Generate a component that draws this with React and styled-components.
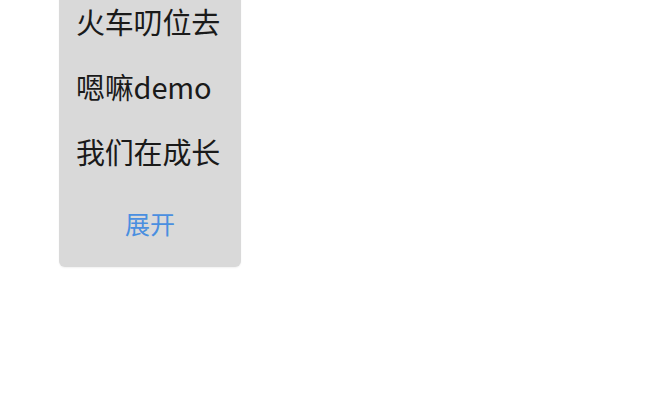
import { createGlobalStyle, styled } from "styled-components";

const GlobalStyle = createGlobalStyle`
  html, body {
    margin: 0;
    padding: 0;
    background: #ffffff;
  }
  body {
    font-family: "Noto Sans CJK SC", "Noto Sans", sans-serif;
    overflow: hidden;
  }
`;

const Page = styled.div`
  width: 670px;
  height: 415px;
  padding-left: 59px;
  box-sizing: border-box;
`;

const Panel = styled.div`
  width: 182px;
  margin-top: -12px;
  background: #d9d9d9;
  border-radius: 0 0 6px 6px;
  box-shadow: 0 1px 2px rgba(0, 0, 0, 0.06);
  display: flex;
  flex-direction: column;
`;

const Item = styled.div`
  height: 65px;
  display: flex;
  align-items: center;
  padding-left: 17px;
  font-size: 29px;
  color: #1a1a1a;
  letter-spacing: -0.2px;
`;

const Toggle = styled.div`
  padding: 26px 0 30px;
  line-height: 28px;
  text-align: center;
  font-size: 25px;
  color: #4a8fe0;
`;

const items = ["火车叨位去", "嗯嘛demo", "我们在成长"];

export default function App() {
  return (
    <>
      <GlobalStyle />
      <Page>
        <Panel>
          {items.map((label) => (
            <Item key={label}>{label}</Item>
          ))}
          <Toggle>展开</Toggle>
        </Panel>
      </Page>
    </>
  );
}
